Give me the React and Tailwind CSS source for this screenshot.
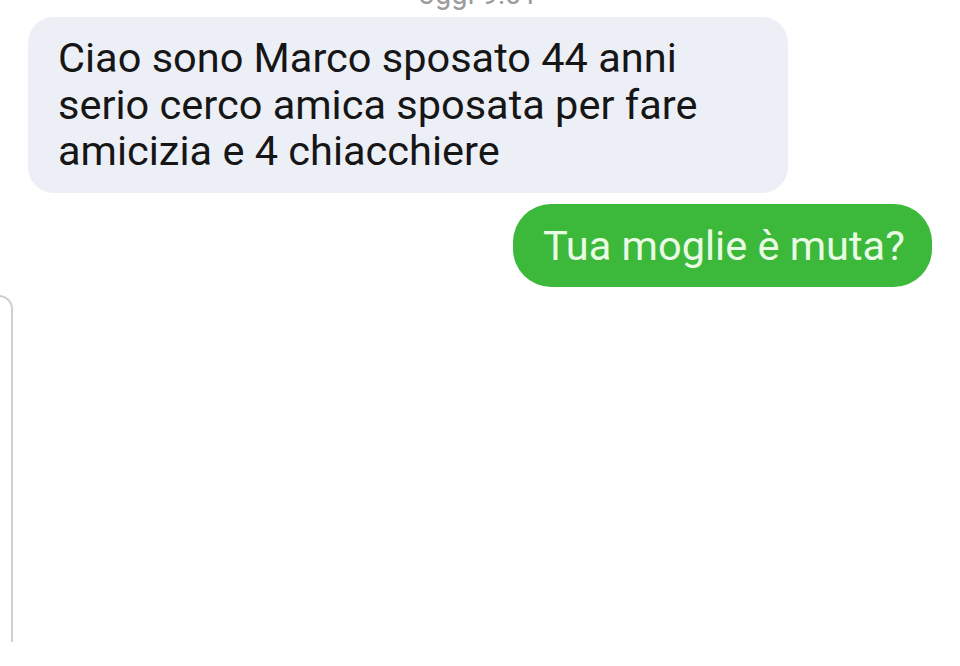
export default function App() {
  return (
    <div className="w-[960px] h-[666px] bg-white overflow-hidden flex flex-col" style={{ fontFamily: 'Roboto, "Noto Sans", sans-serif' }}>
      <div className="h-[17px] overflow-hidden flex justify-center">
        <div className="text-[29px] leading-[34px] mt-[-23px] text-[#9c9c9c] ml-[-4px]">oggi 9:01</div>
      </div>
      <div className="ml-[28px] w-[760px] h-[176px] rounded-[26px] bg-[#edeff6] pl-[30px] pt-[18px] text-[41.5px] leading-[46.5px] text-[#161616]">
        <div>Ciao sono Marco sposato 44 anni</div>
        <div>serio cerco amica sposata per fare</div>
        <div>amicizia e 4 chiacchiere</div>
      </div>
      <div className="flex justify-end mt-[11px] mr-[28px]">
        <div className="h-[83px] w-[419px] rounded-[38px] bg-[#3cb93a] pl-[30px] flex items-center text-[41.5px] leading-[46px] text-[#e9fbe4]">
          Tua moglie è muta?
        </div>
      </div>
      <div className="mt-[8px] ml-[-1px] w-[14px] h-[347px] border-t-2 border-r-2 border-[#cfcfcf] rounded-tr-[14px]"></div>
    </div>
  );
}
